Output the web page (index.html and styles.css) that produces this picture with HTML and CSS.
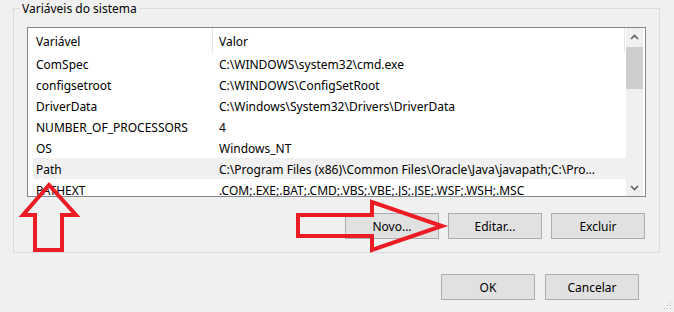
FILE: index.html
```html
<!DOCTYPE html>
<html lang="pt-BR">
<head>
    <meta charset="UTF-8">
    <meta name="viewport" content="width=device-width, initial-scale=1.0">
    <title>Variáveis de Ambiente</title>
    <link rel="stylesheet" href="styles.css">
</head>
<body>
    <div class="dialog">
        <fieldset class="group">
            <legend>Variáveis do sistema</legend>

            <!-- List of system variables -->
            <div class="listbox">
                <div class="list">
                    <div class="list-head">
                        <span class="col-name">Variável</span>
                        <span class="col-value">Valor</span>
                    </div>
                    <div class="row"><span class="col-name">ComSpec</span><span class="col-value">C:\WINDOWS\system32\cmd.exe</span></div>
                    <div class="row"><span class="col-name">configsetroot</span><span class="col-value">C:\WINDOWS\ConfigSetRoot</span></div>
                    <div class="row"><span class="col-name">DriverData</span><span class="col-value">C:\Windows\System32\Drivers\DriverData</span></div>
                    <div class="row"><span class="col-name">NUMBER_OF_PROCESSORS</span><span class="col-value">4</span></div>
                    <div class="row"><span class="col-name">OS</span><span class="col-value">Windows_NT</span></div>
                    <div class="row selected"><span class="col-name">Path</span><span class="col-value">C:\Program Files (x86)\Common Files\Oracle\Java\javapath;C:\Pro...</span></div>
                    <div class="row"><span class="col-name">PATHEXT</span><span class="col-value">.COM;.EXE;.BAT;.CMD;.VBS;.VBE;.JS;.JSE;.WSF;.WSH;.MSC</span></div>
                </div>
                <div class="scrollbar">
                    <span class="sb-btn">
                        <svg width="9" height="6" viewBox="0 0 9 6"><path d="M1 5 L4.5 1.5 L8 5" fill="none" stroke="#606060" stroke-width="1.6"/></svg>
                    </span>
                    <span class="sb-thumb"></span>
                    <span class="sb-space"></span>
                    <span class="sb-btn">
                        <svg width="9" height="6" viewBox="0 0 9 6"><path d="M1 1 L4.5 4.5 L8 1" fill="none" stroke="#606060" stroke-width="1.6"/></svg>
                    </span>
                </div>
            </div>

            <div class="button-row group-buttons">
                <button>Novo...</button>
                <button>Editar...</button>
                <button>Excluir</button>
            </div>
        </fieldset>

        <div class="button-row dialog-buttons">
            <button>OK</button>
            <button>Cancelar</button>
        </div>

        <!-- Size grip -->
        <svg class="grip" width="10" height="10" viewBox="0 0 10 10">
            <rect x="8" y="2" width="1" height="1" fill="#b5b5b5"/>
            <rect x="5" y="5" width="1" height="1" fill="#b5b5b5"/>
            <rect x="8" y="5" width="1" height="1" fill="#b5b5b5"/>
            <rect x="2" y="8" width="1" height="1" fill="#b5b5b5"/>
            <rect x="5" y="8" width="1" height="1" fill="#b5b5b5"/>
            <rect x="8" y="8" width="1" height="1" fill="#b5b5b5"/>
        </svg>

        <!-- Red annotation arrows drawn over the dialog -->
        <svg class="annotations" width="674" height="312" viewBox="0 0 674 312">
            <polygon points="49,185 76,215 62,215 62,250 35,250 35,215 23,215" fill="none" stroke="#ed1c24" stroke-width="4"/>
            <polygon points="298,215 372,215 372,202 442,226 372,250 372,236 298,236" fill="none" stroke="#ed1c24" stroke-width="4"/>
        </svg>
    </div>
</body>
</html>
```

FILE: styles.css
```css
body {
    margin: 0;
    padding: 0;
    background-color: #f0f0f0;
    font-family: 'Noto Sans', 'Liberation Sans', sans-serif;
    font-size: 12px;
    color: #000;
}

.dialog {
    position: relative;
    width: 674px;
    height: 312px;
    overflow: hidden;
}

/* Group box */
.group {
    box-sizing: border-box;
    width: 647px;
    margin: 0 0 0 13px;
    padding: 10px 13px 13px 13px;
    border: 1px solid #dcdcdc;
    min-inline-size: 0;
}

.group legend {
    margin-left: -7px;
    padding: 0 2px;
    line-height: 17px;
}

/* List view */
.listbox {
    box-sizing: border-box;
    display: flex;
    height: 170px;
    border: 1px solid #828790;
    background-color: #fff;
    overflow: hidden;
}

.list {
    flex: 1;
    overflow: hidden;
}

.list-head {
    display: flex;
    height: 25px;
    line-height: 28px;
    padding-right: 1px;
}

.list-head .col-name {
    box-sizing: border-box;
    width: 185px;
    padding-left: 8px;
    border-right: 1px solid #e5e5e5;
}

.list-head .col-value {
    flex: 1;
    padding-left: 6px;
    border-right: 1px solid #e5e5e5;
}

.row {
    display: flex;
    height: 21px;
    line-height: 24px;
    margin-left: 5px;
    white-space: nowrap;
}

.row .col-name {
    box-sizing: border-box;
    width: 180px;
    padding-left: 3px;
}

.row .col-value {
    flex: 1;
    padding-left: 6px;
}

.row.selected {
    background-color: #f0f0f0;
}

/* Scroll bar */
.scrollbar {
    display: flex;
    flex-direction: column;
    width: 17px;
    margin-right: 2px;
    background-color: #f0f0f0;
}

.sb-btn {
    display: flex;
    align-items: center;
    justify-content: center;
    height: 17px;
}

.sb-thumb {
    height: 42px;
    margin-top: 2px;
    background-color: #cdcdcd;
}

.sb-space {
    flex: 1;
}

/* Buttons */
.button-row {
    display: flex;
    justify-content: flex-end;
}

button {
    box-sizing: border-box;
    width: 94px;
    height: 26px;
    padding: 0;
    background-color: #e1e1e1;
    border: 1px solid #adadad;
    font-family: inherit;
    font-size: 12px;
    color: #000;
}

.group-buttons {
    gap: 9px;
    margin-top: 16px;
    padding-right: 1px;
}

.dialog-buttons {
    gap: 10px;
    margin-top: 21px;
    padding-right: 35px;
}

.grip {
    position: absolute;
    right: 2px;
    bottom: 2px;
}

.annotations {
    position: absolute;
    top: 0;
    left: 0;
    pointer-events: none;
}
```
